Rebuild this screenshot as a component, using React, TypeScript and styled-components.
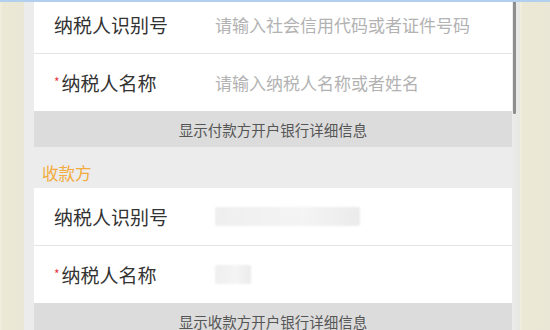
import styled, { createGlobalStyle } from 'styled-components';

const GlobalStyle = createGlobalStyle`
  html, body {
    margin: 0;
    padding: 0;
    height: 330px;
    overflow: hidden;
    background: #ede9d9;
  }
  body {
    font-family: "Noto Sans CJK SC", "Noto Sans", sans-serif;
  }
`;

const Screen = styled.div`
  display: flex;
  height: 330px;
  border-top: 2px solid #b3cfee;
  box-sizing: border-box;
  overflow: hidden;
`;

const SideFrame = styled.div<{ $width: number }>`
  flex: 0 0 ${({ $width }) => $width}px;
  background: linear-gradient(to right, #f3efe0 0px, #ece8d6 3px, #ebe7d6 100%);
`;

const Page = styled.div`
  flex: 1;
  min-width: 0;
  background: #ececec;
  padding-left: 10px;
  overflow: hidden;
`;

// the list is scrolled a little: the payer heading is above the fold
const Scroller = styled.div`
  margin-top: -6px;
`;

const ScrollTrack = styled.div`
  flex: 0 0 8px;
  background: linear-gradient(to right, #ececec, #e6e6e2);
  padding-left: 1px;
  box-sizing: border-box;
`;

const ScrollThumb = styled.div`
  width: 3px;
  height: 114px;
  margin-top: -2px;
  background: #8e8e8e;
  border-radius: 1px;
`;

const SectionTitle = styled.div`
  height: 41px;
  box-sizing: border-box;
  padding: 16px 0 0 8px;
  font-size: 16.5px;
  line-height: 20px;
  color: #f2ab3c;
`;

const Card = styled.div`
  background: #fff;
`;

const Row = styled.div<{ $divider?: boolean }>`
  display: flex;
  align-items: center;
  height: 57px;
  padding-left: 20px;
  border-top: ${({ $divider }) => ($divider ? '1px solid #e4e4e4' : 'none')};
`;

const Label = styled.div`
  flex: 0 0 161px;
  font-size: 19px;
  color: #333;
  white-space: nowrap;
`;

const Required = styled.span`
  color: #e8383d;
  font-size: 12px;
  vertical-align: 4px;
  margin-right: 2px;
`;

const Placeholder = styled.div`
  font-size: 17px;
  color: #b2b2b2;
  white-space: nowrap;
`;

const Masked = styled.div<{ $w: number }>`
  width: ${({ $w }) => $w}px;
  height: 19px;
  background: linear-gradient(to right, #efefef, #f4f4f4 60%, #ebebeb);
  border-radius: 2px;
  filter: blur(1px);
`;

const Toggle = styled.div`
  height: 36px;
  display: flex;
  align-items: center;
  justify-content: center;
  background: #dcdcdc;
  font-size: 14.5px;
  color: #555;
`;

interface Field {
  label: string;
  required?: boolean;
  placeholder?: string;
  masked?: number;
}

interface PartyProps {
  title?: string;
  toggle: string;
  fields: Field[];
}

function Party({ title, toggle, fields }: PartyProps) {
  return (
    <section>
      {title && <SectionTitle>{title}</SectionTitle>}
      <Card>
        {fields.map((f, i) => (
          <Row key={f.label} $divider={i > 0}>
            <Label>
              {f.required && <Required>*</Required>}
              {f.label}
            </Label>
            {f.placeholder ? <Placeholder>{f.placeholder}</Placeholder> : <Masked $w={f.masked ?? 40} />}
          </Row>
        ))}
      </Card>
      <Toggle>{toggle}</Toggle>
    </section>
  );
}

export default function App() {
  return (
    <>
      <GlobalStyle />
      <Screen>
        <SideFrame $width={24} />
        <Page>
          <Scroller>
            <Party
              toggle="显示付款方开户银行详细信息"
              fields={[
                { label: '纳税人识别号', placeholder: '请输入社会信用代码或者证件号码' },
                { label: '纳税人名称', required: true, placeholder: '请输入纳税人名称或者姓名' },
              ]}
            />
            <Party
              title="收款方"
              toggle="显示收款方开户银行详细信息"
              fields={[
                { label: '纳税人识别号', masked: 145 },
                { label: '纳税人名称', required: true, masked: 36 },
              ]}
            />
          </Scroller>
        </Page>
        <ScrollTrack>
          <ScrollThumb />
        </ScrollTrack>
        <SideFrame $width={30} />
      </Screen>
    </>
  );
}
